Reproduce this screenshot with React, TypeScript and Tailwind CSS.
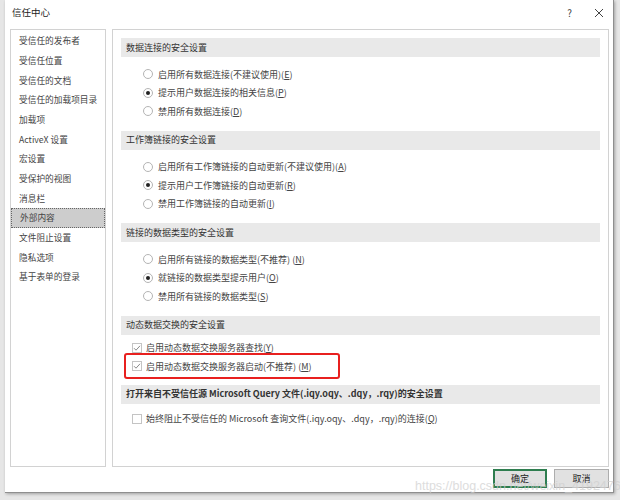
import React from "react";

const navItems = [
  "受信任的发布者",
  "受信任位置",
  "受信任的文档",
  "受信任的加载项目录",
  "加载项",
  "ActiveX 设置",
  "宏设置",
  "受保护的视图",
  "消息栏",
  "外部内容",
  "文件阻止设置",
  "隐私选项",
  "基于表单的登录",
];

type Opt = { label: string; key: string; checked?: boolean; space?: boolean };

const sections: { title: string; options: Opt[] }[] = [
  {
    title: "数据连接的安全设置",
    options: [
      { label: "启用所有数据连接(不建议使用)", key: "E" },
      { label: "提示用户数据连接的相关信息", key: "P", checked: true },
      { label: "禁用所有数据连接", key: "D" },
    ],
  },
  {
    title: "工作簿链接的安全设置",
    options: [
      { label: "启用所有工作簿链接的自动更新(不建议使用)", key: "A" },
      { label: "提示用户工作簿链接的自动更新", key: "R", checked: true },
      { label: "禁用工作簿链接的自动更新", key: "I" },
    ],
  },
  {
    title: "链接的数据类型的安全设置",
    options: [
      { label: "启用所有链接的数据类型(不推荐)", key: "N", space: true },
      { label: "就链接的数据类型提示用户", key: "O", checked: true },
      { label: "禁用所有链接的数据类型", key: "S" },
    ],
  },
];

const font = "font-['Noto_Sans_CJK_SC','Noto_Sans',sans-serif]";

function Label({ text, k, space }: { text: string; k: string; space?: boolean }) {
  return (
    <span>
      {text}
      {space ? " " : ""}(<span className="underline">{k}</span>)
    </span>
  );
}

function Radio({ checked }: { checked?: boolean }) {
  return (
    <span className="w-[10px] h-[10px] rounded-full border border-[#b4b4b4] bg-white flex items-center justify-center shrink-0">
      {checked && <span className="w-[4px] h-[4px] rounded-full bg-[#222]" />}
    </span>
  );
}

function Check({ checked }: { checked?: boolean }) {
  return (
    <span className="w-[10px] h-[10px] border border-[#c4c4c4] bg-white flex items-center justify-center shrink-0">
      {checked && (
        <svg width="8" height="8" viewBox="0 0 8 8">
          <path d="M1 4.2 L3 6.2 L7 1.8" fill="none" stroke="#8a8a8a" strokeWidth="1" />
        </svg>
      )}
    </span>
  );
}

function Header({ children, bold }: { children: React.ReactNode; bold?: boolean }) {
  return (
    <div
      className={`h-[19px] bg-[#e9e9e9] flex items-center pl-[5px] text-[9px] text-[#333] ${
        bold ? "font-semibold" : ""
      }`}
    >
      {children}
    </div>
  );
}

export default function App() {
  return (
    <div className={`w-[620px] h-[500px] bg-[#e6e6e6] relative overflow-hidden ${font}`}>
      <div className="ml-[5px] w-[609px] h-[493px] bg-white border-r border-b border-[#8f8f8f] shadow-[1px_1px_3px_rgba(0,0,0,0.3)] flex flex-col">
        {/* title bar */}
        <div className="h-[29px] flex items-center pl-[7px] pr-[9px] shrink-0">
          <span className="text-[9.5px] text-[#222] pb-[4px]">信任中心</span>
          <span className="ml-auto text-[10px] text-[#444] pb-[4px] mr-[22px]">?</span>
          <svg width="10" height="10" viewBox="0 0 10 10" className="mb-[4px]">
            <path d="M1 1 L9 9 M9 1 L1 9" stroke="#444" strokeWidth="1" />
          </svg>
        </div>

        {/* body */}
        <div className="flex pl-[5px] h-[438px] shrink-0">
          <div className="w-[96px] border border-[#d2d2d2] pt-[1px] text-[8.7px] text-[#444]">
            {navItems.map((n) => (
              <div
                key={n}
                className={`h-[19.67px] flex items-center pl-[8px] ${
                  n === "外部内容" ? "bg-[#cdcdcd] border border-dotted border-[#666] pl-[7px]" : ""
                }`}
              >
                {n}
              </div>
            ))}
          </div>

          <div className="ml-[6px] w-[497px] border border-[#d2d2d2] px-[8px] pt-[8px] text-[9px] text-[#444]">
            {sections.map((s) => (
              <div key={s.title} className="mb-[10px]">
                <Header>{s.title}</Header>
                <div className="pt-[8px]">
                  {s.options.map((o) => (
                    <div key={o.key} className="h-[18.5px] flex items-center pl-[22px] gap-[5px]">
                      <Radio checked={o.checked} />
                      <Label text={o.label} k={o.key} space={o.space} />
                    </div>
                  ))}
                </div>
              </div>
            ))}

            <div className="mt-[4px]">
              <Header>动态数据交换的安全设置</Header>
              <div className="pt-[4px] pb-[9px]">
                <div className="h-[18.5px] flex items-center pl-[11px] gap-[4px]">
                  <Check checked />
                  <Label text="启用动态数据交换服务器查找" k="Y" />
                </div>
                <div className="h-[18.5px] flex items-center pl-[11px] gap-[4px] relative">
                  <Check checked />
                  <Label text="启用动态数据交换服务器启动(不推荐)" k="M" space />
                  <span className="absolute left-[3px] top-[-4px] w-[216px] h-[26px] border-2 border-[#e8201f] rounded-[3px]" />
                </div>
              </div>
            </div>

            <div>
              <Header bold>打开来自不受信任源 Microsoft Query 文件(.iqy.oqy、.dqy，.rqy)的安全设置</Header>
              <div className="pt-[6px]">
                <div className="h-[18.5px] flex items-center pl-[11px] gap-[4px]">
                  <Check />
                  <Label text="始终阻止不受信任的 Microsoft 查询文件(.iqy.oqy、.dqy，.rqy)的连接" k="Q" />
                </div>
              </div>
            </div>
          </div>
        </div>

        {/* footer */}
        <div className="flex justify-end gap-[7px] pr-[4px] pt-[2px] text-[9px] text-[#222]">
          <button className="w-[54px] h-[19px] bg-[#e1e1e1] border-2 border-[#2e7d4f] flex items-center justify-center">
            确定
          </button>
          <button className="w-[55px] h-[19px] bg-[#e1e1e1] border border-[#adadad] flex items-center justify-center">
            取消
          </button>
        </div>
      </div>

      <span className="absolute left-[415px] top-[478px] text-[12.5px] leading-[16px] text-[#cfcfcf] opacity-70 font-['Liberation_Sans',sans-serif] pointer-events-none whitespace-nowrap">
        https://blog.csdn.net/weixin_41924763
      </span>
    </div>
  );
}
